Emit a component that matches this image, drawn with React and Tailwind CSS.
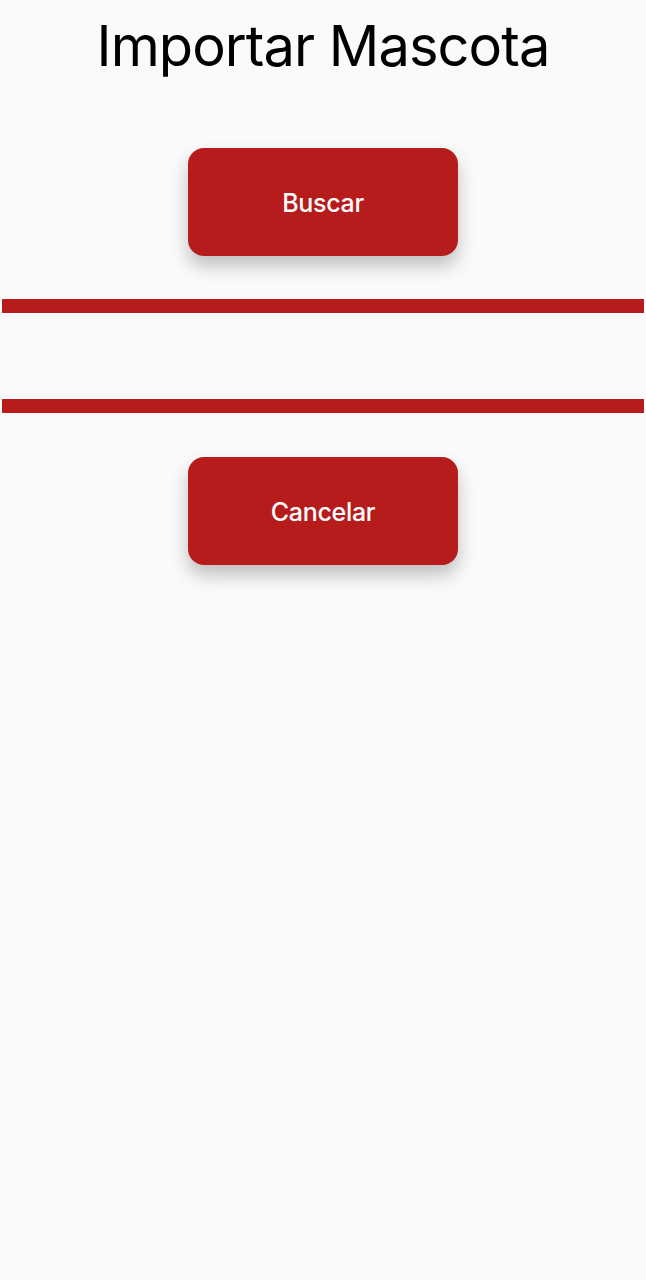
export default function App() {
  return (
    <div className="min-h-screen bg-[#fafafa] flex flex-col items-center" style={{ fontFamily: 'Inter, "Noto Sans", sans-serif' }}>
      {/* Title */}
      <h1 className="text-[56px] leading-[1] font-normal text-black mt-[18px] tracking-[-0.95px]">
        Importar Mascota
      </h1>

      {/* Buscar */}
      <button className="mt-[74px] w-[270px] h-[108px] pt-[3px] rounded-[16px] bg-[#b71c1c] text-white text-[25px] font-medium tracking-[-0.3px] shadow-[0_10px_18px_rgba(0,0,0,0.24)]">
        Buscar
      </button>

      {/* Field */}
      <div className="mt-[43px] w-[642px] h-[114px] border-y-[14px] border-[#b71c1c]" />

      {/* Cancelar */}
      <button className="mt-[44px] w-[270px] h-[108px] pt-[3px] rounded-[16px] bg-[#b71c1c] text-white text-[25px] font-medium tracking-[-0.3px] shadow-[0_10px_18px_rgba(0,0,0,0.24)]">
        Cancelar
      </button>
    </div>
  );
}
